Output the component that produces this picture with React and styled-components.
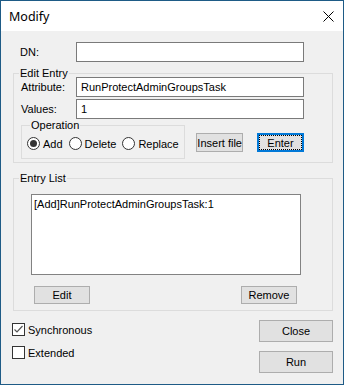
import React from 'react';
import styled, { createGlobalStyle } from 'styled-components';

const GlobalStyle = createGlobalStyle`
  html, body {
    margin: 0;
    padding: 0;
    background: #f0f0f0;
  }
  body {
    font-family: "Liberation Sans", Arial, sans-serif;
    font-size: 11px;
    color: #000;
  }
`;

const Window = styled.div`
  width: 344px;
  height: 385px;
  box-sizing: border-box;
  border: 1px solid #1e5b86;
  display: flex;
  flex-direction: column;
  background: #f0f0f0;
`;

const TitleBar = styled.div`
  height: 30px;
  flex: none;
  display: flex;
  align-items: center;
  justify-content: space-between;
  padding: 0 9px 0 8px;
  background: #fff;
  font-family: "Noto Sans", "Liberation Sans", sans-serif;
  font-size: 12.5px;
  color: #000;
`;

const Body = styled.div`
  flex: 1;
  display: flex;
  flex-direction: column;
  padding: 11px 10px 0 12px;
`;

const Row = styled.div`
  display: flex;
  align-items: center;
  height: 20px;
  padding-left: 7px;
  margin-top: ${({ top }) => top || 0}px;
`;

const Label = styled.span`
  width: ${({ w }) => w}px;
  flex: none;
  white-space: nowrap;
`;

const TextBox = styled.div`
  width: 228px;
  height: 20px;
  box-sizing: border-box;
  border: 1px solid #7a7a7a;
  background: #fff;
  padding-left: 4px;
  display: flex;
  align-items: center;
  white-space: nowrap;
`;

const Group = styled.fieldset`
  margin: ${({ top }) => top || 0}px 0 0 0;
  padding: 0;
  width: ${({ w }) => w}px;
  box-sizing: border-box;
  border: 1px solid #dcdcdc;
  min-width: 0;
`;

const Caption = styled.legend`
  padding: 0 1px;
  margin-left: ${({ indent }) => indent}px;
  height: 8px;
  line-height: 8px;
  font-size: 11px;
`;

const OpRow = styled.div`
  display: flex;
  align-items: flex-end;
  margin: 2px 0 3px 7px;
`;

const Radios = styled.div`
  display: flex;
  align-items: center;
  height: 13px;
  padding: 8px 0 8px 5px;
  gap: 6px;
`;

const Option = styled.label`
  display: flex;
  align-items: center;
  gap: 3px;
`;

const RadioMark = styled.span`
  width: 13px;
  height: 13px;
  box-sizing: border-box;
  border: 1px solid #333;
  border-radius: 50%;
  background: #fff;
  display: flex;
  align-items: center;
  justify-content: center;
  &::after {
    content: '';
    width: 7px;
    height: 7px;
    border-radius: 50%;
    background: ${({ on }) => (on ? '#333' : 'transparent')};
  }
`;

const Button = styled.div`
  width: ${({ w }) => w}px;
  height: ${({ h }) => h}px;
  box-sizing: border-box;
  border: ${({ focused }) => (focused ? '2px solid #0078d7' : '1px solid #adadad')};
  background: #e1e1e1;
  display: flex;
  align-items: center;
  justify-content: ${({ tight }) => (tight ? 'flex-end' : 'center')};
  overflow: hidden;
  white-space: nowrap;
  margin-left: ${({ left }) => left || 0}px;
  margin-bottom: ${({ bottom }) => bottom || 0}px;
  outline: ${({ focused }) => (focused ? '1px dotted #000' : 'none')};
  outline-offset: -3px;
  flex: none;
`;

const ListBox = styled.div`
  width: 270px;
  height: 81px;
  box-sizing: border-box;
  border: 1px solid #828282;
  background: #fff;
  padding: 3px 2px;
  margin: 12px 0 0 17px;
`;

const ListButtons = styled.div`
  display: flex;
  justify-content: space-between;
  padding: 11px 35px 6px 20px;
`;

const Footer = styled.div`
  display: flex;
  justify-content: space-between;
  margin-top: 9px;
`;

const Checks = styled.div`
  display: flex;
  flex-direction: column;
  gap: 10px;
  padding-top: 3px;
  margin-left: -1px;
`;

const Check = styled.label`
  display: flex;
  align-items: center;
  gap: 3px;
  height: 13px;
`;

const Box = styled.span`
  width: 13px;
  height: 13px;
  box-sizing: border-box;
  border: 1px solid #333;
  background: #fff;
  display: flex;
  align-items: center;
  justify-content: center;
`;

const Actions = styled.div`
  display: flex;
  flex-direction: column;
  gap: 9px;
`;

const CloseIcon = () => (
  <svg width="11" height="11" viewBox="0 0 11 11">
    <path d="M0.5 0.5 L10.5 10.5 M10.5 0.5 L0.5 10.5" stroke="#000" strokeWidth="1" />
  </svg>
);

const Tick = () => (
  <svg width="11" height="11" viewBox="0 0 11 11">
    <path d="M1.5 5.5 L4 8 L9.5 2" fill="none" stroke="#555" strokeWidth="1.2" />
  </svg>
);

export default function App() {
  return (
    <>
      <GlobalStyle />
      <Window>
        <TitleBar>
          <span>Modify</span>
          <CloseIcon />
        </TitleBar>
        <Body>
          <Row>
            <Label w={56}>DN:</Label>
            <TextBox />
          </Row>

          <Group w={320} top={7}>
            <Caption indent={5}>Edit Entry</Caption>
            <Row>
              <Label w={55}>Attribute:</Label>
              <TextBox>RunProtectAdminGroupsTask</TextBox>
            </Row>
            <Row top={2}>
              <Label w={55}>Values:</Label>
              <TextBox>1</TextBox>
            </Row>
            <OpRow>
              <Group w={164}>
                <Caption indent={8}>Operation</Caption>
                <Radios>
                  <Option>
                    <RadioMark on />
                    Add
                  </Option>
                  <Option>
                    <RadioMark />
                    Delete
                  </Option>
                  <Option>
                    <RadioMark />
                    Replace
                  </Option>
                </Radios>
              </Group>
              <Button w={47} h={19} left={11} bottom={7} tight>
                Insert file
              </Button>
              <Button w={47} h={19} left={14} bottom={7} focused>
                Enter
              </Button>
            </OpRow>
          </Group>

          <Group w={320} top={11}>
            <Caption indent={5}>Entry List</Caption>
            <ListBox>[Add]RunProtectAdminGroupsTask:1</ListBox>
            <ListButtons>
              <Button w={56} h={18}>Edit</Button>
              <Button w={56} h={18}>Remove</Button>
            </ListButtons>
          </Group>

          <Footer>
            <Checks>
              <Check>
                <Box>
                  <Tick />
                </Box>
                Synchronous
              </Check>
              <Check>
                <Box />
                Extended
              </Check>
            </Checks>
            <Actions>
              <Button w={74} h={22}>Close</Button>
              <Button w={74} h={22}>Run</Button>
            </Actions>
          </Footer>
        </Body>
      </Window>
    </>
  );
}
